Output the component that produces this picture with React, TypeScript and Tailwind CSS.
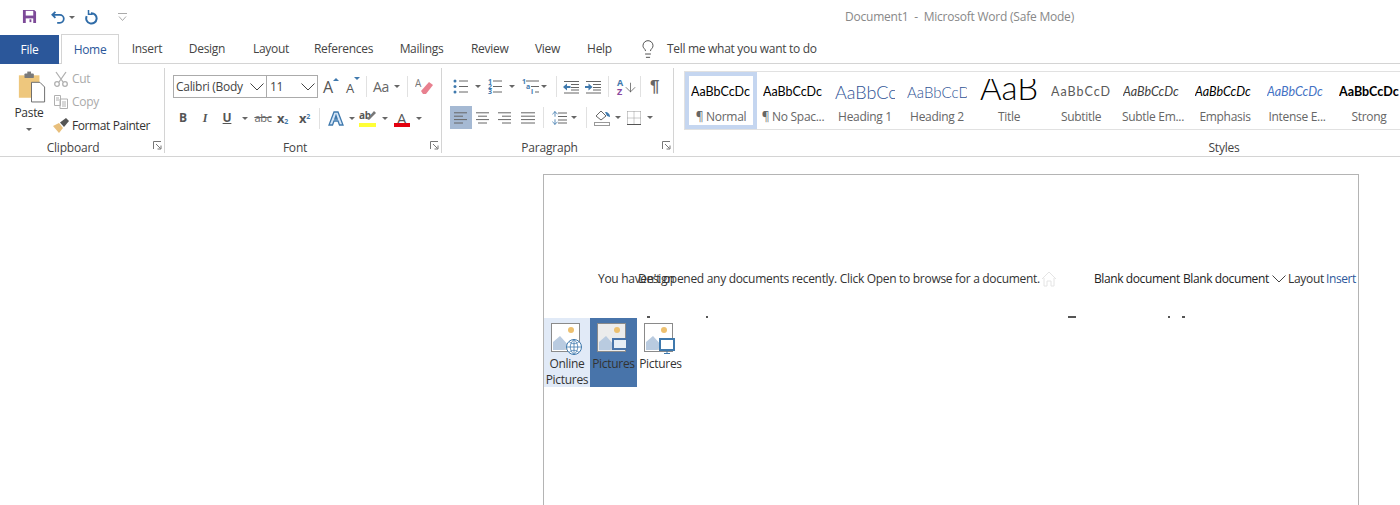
import { Lightbulb, ArrowUp, ArrowDown } from "lucide-react"

const ui = "font-['Open_Sans','Noto_Sans',sans-serif]"

function Caret({ className = "" }: { className?: string }) {
  return <span className={`w-0 h-0 border-x-[3px] border-x-transparent border-t-[3px] border-t-[#666] ${className}`} />
}

function Sep({ className = "" }: { className?: string }) {
  return <span className={`w-px h-[21px] bg-[#e1e1e1] ${className}`} />
}

function Chevron({ className = "" }: { className?: string }) {
  return (
    <svg width="14" height="8" viewBox="0 0 14 8" fill="none" stroke="#444" className={className}>
      <path d="M.5.500L7 7l6.500-6.500" />
    </svg>
  )
}

function GroupLabel({ text, className = "" }: { text: string; className?: string }) {
  return <div className={`absolute bottom-[-4px] inset-x-0 h-[18px] leading-[18px] text-center tracking-[-0.2px] ${className}`}>{text}</div>
}

function Launcher() {
  return (
    <svg width="9" height="9" viewBox="0 0 9 9" className="absolute right-[2px] bottom-[3px]" fill="none" stroke="#777">
      <path d="M.5 8V.5H8" />
      <path d="M3 3l4.500 4.500M8 4.500V8H4.500" />
    </svg>
  )
}

function LinesIcon({ align }: { align: "left" | "center" | "right" | "justify" }) {
  const rows: [number, number][] =
    align === "left" ? [[1, 14], [1, 10], [1, 14], [1, 10]]
    : align === "center" ? [[1, 14], [3, 12], [1, 14], [3, 12]]
    : align === "right" ? [[1, 14], [5, 14], [1, 14], [5, 14]]
    : [[1, 15], [1, 15], [1, 15], [1, 15]]
  return (
    <svg width="16" height="12" viewBox="0 0 16 12" stroke="#666">
      {rows.map(([a, b], i) => <path key={i} d={`M${a} ${i * 3.4 + 0.8}H${b}`} />)}
    </svg>
  )
}

function Bullets() {
  return (
    <svg width="16" height="15" viewBox="0 0 16 15">
      {[2, 7.5, 13].map((y) => (
        <g key={y}>
          <circle cx="2" cy={y} r="1.500" fill="#3f79ad" />
          <path d={`M6 ${y}H15`} stroke="#666" />
        </g>
      ))}
    </svg>
  )
}

function Numbering() {
  return (
    <div className="relative w-[16px] h-[15px] text-[7px] leading-[5px] font-bold text-[#3f79ad]">
      <span className="absolute left-[1px] top-0">1</span>
      <span className="absolute left-[1px] top-[5px]">2</span>
      <span className="absolute left-[1px] top-[10px]">3</span>
      <svg width="16" height="15" viewBox="0 0 16 15" stroke="#666" className="absolute inset-0">
        <path d="M6 2H15M6 7.500H15M6 13H15" />
      </svg>
    </div>
  )
}

function Multilevel() {
  return (
    <div className="relative w-[17px] h-[15px] text-[7px] leading-[5px] font-bold text-[#3f79ad]">
      <span className="absolute left-0 top-0">1</span>
      <span className="absolute left-[4px] top-[5px]">a</span>
      <span className="absolute left-[9px] top-[10px]">i</span>
      <svg width="17" height="15" viewBox="0 0 17 15" stroke="#666" className="absolute inset-0">
        <path d="M4 2H17M9 7.500H17M13 13H17" />
      </svg>
    </div>
  )
}

function IndentIcon({ out }: { out: boolean }) {
  return (
    <svg width="17" height="14" viewBox="0 0 17 14" fill="#3f79ad">
      <path d="M1 1.500H16M8 4.500H16M8 7.500H16M8 10H16M1 13H16" stroke="#666" fill="none" />
      {out ? <path d="M0 7l4-3.500V6h3.500v2H4v2.500z" /> : <path d="M7.500 7l-4-3.500V6H0v2h3.500v2.500z" />}
    </svg>
  )
}

function PictureIcon({ dark, children }: { dark?: boolean; children?: React.ReactNode }) {
  return (
    <svg width="32" height="32" viewBox="0 0 32 32" className="-ml-[1px] shrink-0">
      <rect x=".5" y=".5" width="28" height="28" fill={dark ? "#ececec" : "#fff"} stroke="#8a8a8a" />
      <circle cx="20" cy="7" r="3" fill="#edc06f" />
      <path d="M2 27V19L9 13 19 24 20 27z" fill="#b9cbe0" />
      <path d="M13 27L20 20 27 27z" fill="#d3d3d3" />
      {children}
    </svg>
  )
}

const lato = "font-['Lato',sans-serif] tracking-normal"

const styles = [
  { sample: "AaBbCcDc", label: "¶ Normal", cls: `text-[12.5px] text-black ${lato}`, selected: true },
  { sample: "AaBbCcDc", label: "¶ No Spac...", cls: `text-[12.5px] text-black ${lato}` },
  { sample: "AaBbCc", label: "Heading 1", cls: `text-[18px] font-light text-[#2f5496] ${lato}` },
  { sample: "AaBbCcD", label: "Heading 2", cls: `text-[15px] font-light text-[#2f5496] ${lato}` },
  { sample: "AaB", label: "Title", cls: `text-[33px] font-light leading-[20px] pb-[12px] justify-center text-black ${lato}` },
  { sample: "AaBbCcD", label: "Subtitle", cls: "text-[12.5px] font-['Lato',sans-serif] tracking-[1px] text-[#5a5a5a]" },
  { sample: "AaBbCcDc", label: "Subtle Em...", cls: `text-[12.5px] italic text-[#404040] ${lato}` },
  { sample: "AaBbCcDc", label: "Emphasis", cls: `text-[12.5px] italic text-black ${lato}` },
  { sample: "AaBbCcDc", label: "Intense E...", cls: `text-[12.5px] italic text-[#4472c4] ${lato}` },
  { sample: "AaBbCcDc", label: "Strong", cls: `text-[12.5px] font-bold text-black ${lato}` },
]

const tabs = [
  ["Insert", "w-[56px]"],
  ["Design", "w-[64px]"],
  ["Layout", "w-[35px] ml-[14px]"],
  ["References", "w-[63px] ml-[24px]"],
  ["Mailings", "w-[45px] ml-[24px]"],
  ["Review", "w-[37px] ml-[27px]"],
  ["View", "w-[25px] ml-[27px]"],
  ["Help", "w-[25px] ml-[27px]"],
]

export default function App() {
  return (
    <div className={`w-[1400px] h-[505px] overflow-hidden bg-white text-[12px] tracking-[-0.3px] text-[#444] flex flex-col ${ui}`}>
      {/* title bar */}
      <div className="h-[34px] relative flex items-center shrink-0">
        <svg width="15" height="15" viewBox="0 0 16 16" className="ml-[22px] mb-[1px]">
          <path d="M1 1h12l2 2v12H1z" fill="#7d4a98" />
          <rect x="4" y="2" width="8" height="5" fill="#fff" />
          <rect x="4" y="10" width="8" height="5" fill="#fff" />
          <rect x="8" y="11" width="2" height="3" fill="#7d4a98" />
        </svg>
        <svg width="15" height="15" viewBox="0 0 17 15" fill="none" stroke="#2f6ca8" strokeWidth="2" className="ml-[14px]">
          <path d="M5 1L1.500 4.500 5 8M2 4.500h8a4.500 4.500 0 0 1 0 9H7" />
        </svg>
        <Caret className="ml-[3px] mt-[1px]" />
        <svg width="15" height="15" viewBox="0 0 15 15" fill="none" stroke="#2f6ca8" strokeWidth="2" className="ml-[10px]">
          <path d="M6 3.200a5.200 5.200 0 1 1-4.300 3" />
          <path d="M3.500 0v4.200h4.200" strokeWidth="1.500" />
        </svg>
        <svg width="9" height="9" viewBox="0 0 9 9" fill="none" stroke="#aaa" className="ml-[18px]">
          <path d="M0 .5h9M1 3.500l3.500 4 3.500-4" />
        </svg>
        <span className="absolute left-[845px] text-[#888] tracking-[-0.22px]">Document1&nbsp; -&nbsp; Microsoft Word (Safe Mode)</span>
      </div>

      {/* tabs */}
      <div className="h-[30px] flex items-end border-b border-[#d4d4d4] shrink-0 relative">
        <div className="w-[59px] h-[29px] bg-[#2b579a] text-white flex items-center justify-center mb-[-1px]">File</div>
        <div className="w-[58px] h-[30px] ml-[2px] bg-white border border-b-0 border-[#d4d4d4] text-[#2b579a] flex items-center justify-center mb-[-1px] relative z-10">Home</div>
        <div className="flex h-[29px] items-center">
          {tabs.map(([t, w]) => (
            <span key={t} className={`${w} text-center`}>{t}</span>
          ))}
          <Lightbulb size={20} strokeWidth={1.1} className="ml-[26px] text-[#444]" />
          <span className="ml-[9px]">Tell me what you want to do</span>
        </div>
      </div>

      {/* ribbon */}
      <div className="h-[93px] flex border-b border-[#d4d4d4] shrink-0 pt-[4px]">
        {/* clipboard */}
        <div className="w-[165px] h-[85px] border-r border-[#d4d4d4] relative flex shrink-0">
          <div className="w-[58px] -mr-[4px] flex flex-col items-center">
            <svg width="29" height="32" viewBox="0 0 31 33" className="mt-[3px] ml-[4px]">
              <path d="M2 4h22v24H2z" fill="#eec77d" />
              <rect x="8" y="2" width="10" height="5" rx="1" fill="#7a7a7a" />
              <rect x="11" y="0" width="4" height="3" fill="#7a7a7a" />
              <path d="M15.500 11.500h9l5 5v16h-14z" fill="#fff" stroke="#666" />
            </svg>
            <span className="mt-[2px] leading-[16px] text-[#333]">Paste</span>
            <Caret className="mt-[7px]" />
          </div>
          <div className="flex flex-col">
            <div className="h-[22px] flex items-center text-[#aaa]">
              <svg width="14" height="16" viewBox="0 0 14 16" fill="none" stroke="#b0b0b0" strokeWidth="1.300">
                <path d="M2 1l7 10M12 1L5 11" />
                <circle cx="3" cy="13" r="2.300" />
                <circle cx="11" cy="13" r="2.300" />
              </svg>
              <span className="ml-[4px]">Cut</span>
            </div>
            <div className="h-[24px] flex items-center text-[#aaa]">
              <svg width="14" height="14" viewBox="0 0 14 14" fill="none" stroke="#b0b0b0">
                <path d="M.5.500h6v10h-6zM6 4h7.500v9.500H6zM8 7h4M8 9h4M8 11h4M2 3h3M2 5h3" />
              </svg>
              <span className="ml-[4px]">Copy</span>
            </div>
            <div className="h-[23px] flex items-center text-[#333]">
              <svg width="16" height="15" viewBox="0 0 16 15" className="-ml-px">
                <path d="M0 8l6-3 4 5-4 5z" fill="#e8bf7c" />
                <path d="M7 4.500l6-4.500 3 3-5 6z" fill="#555" />
              </svg>
              <span className="ml-[3px] tracking-[-0.4px]">Format Painter</span>
            </div>
          </div>
          <GroupLabel text="Clipboard" className="pr-[18px]" />
          <Launcher />
        </div>

        {/* font */}
        <div className="w-[277px] h-[85px] border-r border-[#d4d4d4] relative flex flex-col shrink-0 pl-[8px]">
          <div className="flex items-center mt-[7px] h-[23px]">
            <div className="w-[94px] h-[23px] border border-[#ababab] flex items-center pl-[2px] pr-[2px] justify-between">
              <span className="whitespace-nowrap overflow-hidden w-[73px]">Calibri (Body</span>
              <Chevron />
            </div>
            <div className="w-[51px] h-[23px] border border-l-0 border-[#ababab] flex items-center pl-[3px] pr-[2px] justify-between">
              <span>11</span>
              <Chevron />
            </div>
            <div className="relative w-[15px] ml-[5px] text-[16px] leading-[20px] text-[#555]">
              A<span className="absolute left-[10px] top-[1px] w-0 h-0 border-x-[3px] border-x-transparent border-b-[3px] border-b-[#3f79ad]" />
            </div>
            <div className="relative w-[14px] ml-[8px] text-[13px] leading-[20px] text-[#555] mt-[2px]">
              A<span className="absolute left-[8px] top-[-1px] w-0 h-0 border-x-[3px] border-x-transparent border-t-[3px] border-t-[#3f79ad]" />
            </div>
            <Sep className="ml-[6px]" />
            <span className="ml-[6px] text-[14px] text-[#666] w-[18px]">Aa</span>
            <Caret className="ml-[3px]" />
            <Sep className="ml-[7px]" />
            <svg width="18" height="17" viewBox="0 0 18 17" className="ml-[7px]">
              <path d="M6 13l8-9 4 3-7 9H8z" fill="#e8808f" />
              <text x="0" y="9" fontSize="10" fill="#777">A</text>
            </svg>
          </div>
          <div className="flex items-center mt-[8px] h-[24px]">
            <span className="w-[20px] ml-[-8px] pl-[8px] box-content text-center font-bold text-[#555]">B</span>
            <span className="w-[14px] ml-[5px] text-center italic font-bold font-['Liberation_Serif',serif] text-[#555]">I</span>
            <span className="w-[14px] ml-[8px] text-center underline font-bold text-[#555]">U</span>
            <Caret className="ml-[8px]" />
            <span className="w-[18px] ml-[6px] text-center line-through text-[#666] text-[11px]">abc</span>
            <span className="w-[16px] ml-[5px] font-bold text-[#555] text-[13px] leading-none">x<sub className="text-[7px] text-[#3f79ad]">2</sub></span>
            <span className="w-[16px] ml-[6px] font-bold text-[#555] text-[13px] leading-none">x<sup className="text-[7px] text-[#3f79ad]">2</sup></span>
            <Sep className="ml-[4px]" />
            <svg width="16" height="16" viewBox="0 0 16 16" fill="#d6e6f7" stroke="#3f79ad" strokeWidth="1.300" className="ml-[8px]">
              <path d="M6 2h4l5 13h-3.500L10 11H6l-1.500 4H1zM8 5.500L6.800 9h2.400z" fillRule="evenodd" />
            </svg>
            <Caret className="ml-[5px]" />
            <div className="w-[17px] ml-[4px] relative h-[17px]">
              <span className="absolute left-0 top-[-2px] text-[10px] font-bold text-[#555]">ab</span>
              <svg width="10" height="10" viewBox="0 0 10 10" className="absolute right-0 top-0"><path d="M1 9l7-8 2 2-7 7z" fill="#777" /></svg>
              <span className="absolute bottom-0 w-full h-[4px] bg-[#ffff37]" />
            </div>
            <Caret className="ml-[6px]" />
            <div className="w-[16px] ml-[6px] relative h-[17px]">
              <span className="absolute left-[3px] top-[-3px] text-[15px] text-[#555]">A</span>
              <span className="absolute bottom-0 w-full h-[4px] bg-[#e3000f]" />
            </div>
            <Caret className="ml-[6px]" />
          </div>
          <GroupLabel text="Font" className="pr-[16px]" />
          <Launcher />
        </div>

        {/* paragraph */}
        <div className="w-[232px] h-[85px] border-r border-[#d4d4d4] relative flex flex-col shrink-0">
          <div className="flex items-center mt-[7px] h-[23px] pl-[11px]">
            <Bullets />
            <Caret className="ml-[6px]" />
            <span className="ml-[6px]"><Numbering /></span>
            <Caret className="ml-[6px]" />
            <span className="ml-[7px]"><Multilevel /></span>
            <Caret className="ml-[2px]" />
            <Sep className="ml-[9px]" />
            <span className="ml-[6px]"><IndentIcon out /></span>
            <span className="ml-[5px]"><IndentIcon out={false} /></span>
            <Sep className="ml-[6px]" />
            <div className="ml-[8px] w-[15px] relative h-[18px] text-[9px] leading-[9px] font-bold">
              <span className="absolute left-0 top-0 text-[#3f79ad]">A</span>
              <span className="absolute left-0 top-[9px] text-[#8a4aa0]">Z</span>
              <ArrowDown size={15} strokeWidth={1.2} className="absolute left-[6px] top-[2px] text-[#555]" />
            </div>
            <Sep className="ml-[8px]" />
            <span className="ml-[9px] text-[17px] leading-none text-[#666] font-bold font-['Liberation_Sans',sans-serif]">¶</span>
          </div>
          <div className="flex items-center mt-[8px] h-[23px] pl-[8px]">
            <div className="w-[22px] h-[23px] bg-[#a5b9d3] flex items-center justify-center"><LinesIcon align="left" /></div>
            <span className="ml-[3px]"><LinesIcon align="center" /></span>
            <span className="ml-[6px]"><LinesIcon align="right" /></span>
            <span className="ml-[7px]"><LinesIcon align="justify" /></span>
            <Sep className="ml-[7px]" />
            <div className="ml-[8px] w-[15px] h-[16px] relative">
              <div className="absolute left-[-1px] top-0 flex flex-col justify-between h-[16px] text-[#3f79ad]">
                <ArrowUp size={8} strokeWidth={2.500} />
                <ArrowDown size={8} strokeWidth={2.500} />
              </div>
              <svg width="9" height="12" viewBox="0 0 9 12" stroke="#666" className="absolute left-[6px] top-[2px]">
                <path d="M0 1H9M0 4.500H9M0 8H9M0 11H9" />
              </svg>
            </div>
            <Caret className="ml-[4px]" />
            <Sep className="ml-[9px]" />
            <svg width="17" height="17" viewBox="0 0 17 17" fill="none" className="ml-[7px]">
              <path d="M2 7l5-5 5 5-5 4z" stroke="#666" />
              <path d="M11 3c3 0 5 2 5 5l-3-1z" fill="#3f79ad" />
              <rect x=".5" y="13.500" width="15" height="3" stroke="#999" />
            </svg>
            <Caret className="ml-[4px]" />
            <svg width="14" height="14" viewBox="0 0 14 14" fill="none" stroke="#999" className="ml-[6px]">
              <path d="M.5.500h13M.500 7h13M.500.500v13M7 .500v13M13.500.500v13" strokeDasharray="1 1" />
              <path d="M0 13.500h14" stroke="#555" />
            </svg>
            <Caret className="ml-[6px]" />
          </div>
          <GroupLabel text="Paragraph" className="pr-[16px]" />
          <Launcher />
        </div>

        {/* styles */}
        <div className="w-[1100px] h-[85px] shrink-0 relative pl-[10px]">
          <div className="flex h-[59px] mt-[3px] border-y border-l border-[#e1e1e1]">
            {styles.map((s) => (
              <div key={s.label} className={`w-[72px] shrink-0 h-[57px] flex flex-col items-center border-[4px] ${s.selected ? "border-[#c5d6f0]" : "border-transparent"}`}>
                <div className={`w-[60px] mt-[3px] h-[27px] overflow-hidden whitespace-nowrap flex items-center ${s.cls}`}>{s.sample}</div>
                <div className="text-[12px] leading-[16px] mt-[3px] whitespace-nowrap tracking-[-0.3px] text-[#666]">{s.label}</div>
              </div>
            ))}
          </div>
          <GroupLabel text="Styles" />
        </div>
      </div>

      {/* document */}
      <div className="flex-1 pt-[17px] pl-[543px]">
        <div className="w-[816px] h-[400px] border border-b-0 border-[#b4b4b4] bg-white text-[#333]">
          <div className="h-[92px]" />
          <div className="h-[24px] flex items-center whitespace-nowrap relative">
            <span className="ml-[54px]">You haven't opened any documents recently. Click Open to browse for a document.</span>
            <span className="absolute left-[94px]">Design</span>
            <svg width="16" height="16" viewBox="0 0 16 16" fill="none" stroke="#e4e4e4" className="ml-[1px]">
              <path d="M1 8l7-7 7 7M3 7v8h3v-5h4v5h3V7" />
            </svg>
            <span className="absolute left-[550px] font-medium text-[#222] tracking-[-0.4px]">Blank document</span>
            <span className="absolute left-[639px] font-medium text-[#222] tracking-[-0.4px]">Blank document</span>
            <Chevron className="absolute left-[728px]" />
            <span className="absolute left-[744px]">Layout</span>
            <span className="absolute left-[782px] text-[#2b579a] tracking-[-0.4px]">Insert</span>
          </div>
          <div className="flex h-[2px] mt-[25px]">
            <span className="h-[2px] w-[3px] ml-[103px] bg-[#555]" />
            <span className="h-[2px] w-[2px] ml-[56px] bg-[#555]" />
            <span className="h-[2px] w-[8px] ml-[360px] bg-[#555]" />
            <span className="h-[2px] w-[2px] ml-[92px] bg-[#555]" />
            <span className="h-[2px] w-[3px] ml-[12px] bg-[#555]" />
          </div>
          <div className="flex">
            <div className="w-[46px] h-[69px] bg-[#e1eaf7] flex flex-col items-center pt-[5px]">
              <PictureIcon>
                <circle cx="23" cy="24" r="7.500" fill="#fff" stroke="#3f79ad" />
                <path d="M15.500 24h15M23 16.500v15M18 18.500c3 3 7 3 10 0M18 29.500c3-3 7-3 10 0M23 16.500c-5 5-5 10 0 15M23 16.500c5 5 5 10 0 15" fill="none" stroke="#3f79ad" strokeWidth=".8" />
              </PictureIcon>
              <span className="leading-[16px] mt-[1px] text-center">Online Pictures</span>
            </div>
            <div className="w-[47px] h-[69px] bg-[#4874aa] flex flex-col items-center pt-[5px]">
              <PictureIcon dark>
                <rect x="16" y="16" width="14" height="10" fill="#e6eef6" stroke="#4874aa" strokeWidth="2" />
              </PictureIcon>
              <span className="leading-[16px] mt-[1px]">Pictures</span>
            </div>
            <div className="w-[47px] h-[69px] flex flex-col items-center pt-[5px]">
              <PictureIcon>
                <rect x="16" y="16" width="14" height="11" fill="#fff" stroke="#3f79ad" strokeWidth="2" />
                <path d="M20 30.500h6M23 28v2" stroke="#3f79ad" />
              </PictureIcon>
              <span className="leading-[16px] mt-[1px]">Pictures</span>
            </div>
          </div>
        </div>
      </div>
    </div>
  )
}
